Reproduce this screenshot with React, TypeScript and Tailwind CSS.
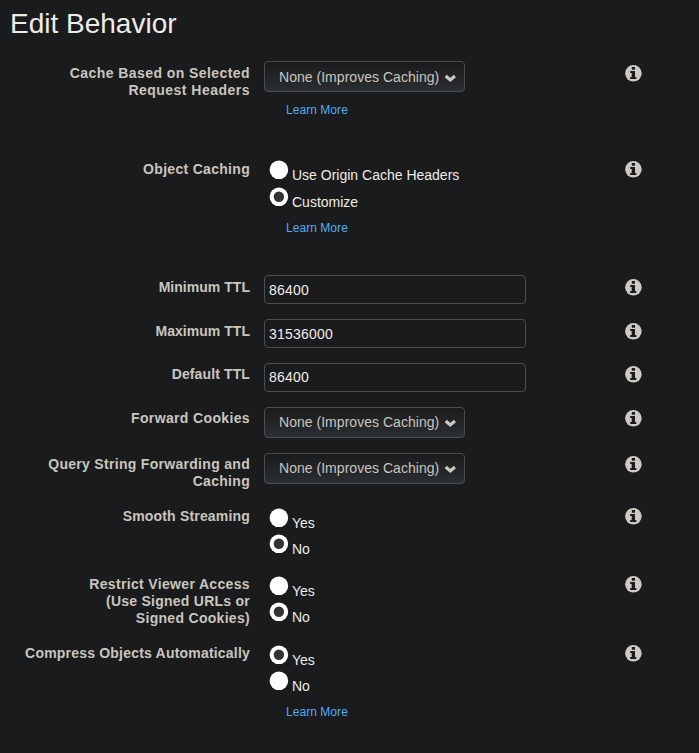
import type { ReactNode } from "react";

interface LabelLine {
  text: string;
  tracking?: string;
}

function InfoIcon() {
  return (
    <svg viewBox="0 0 17 17" className="block h-[17px] w-[17px]" aria-label="Info">
      <circle cx="8.4" cy="8.3" r="8.3" fill="#cdc8c2" />
      <path
        d="M6.8 2.1h3.2v2.6H6.8zM5.2 6h4.8v6h1.3v2.1H5.2V12h1.5V8H5.2z"
        fill="#1a1b1d"
      />
    </svg>
  );
}

function Row({
  lines,
  height,
  top = "pt-1",
  children,
}: {
  lines: LabelLine[];
  height: string;
  top?: string;
  children: ReactNode;
}) {
  return (
    <div className={`flex ${height}`}>
      <div className={`w-[250px] shrink-0 ${top} text-right text-[14px] leading-[17px] font-bold whitespace-nowrap text-[#c9c5bd]`}>
        {lines.map(({ text, tracking = "tracking-[0.3px]" }) => (
          <div key={text} className={tracking}>{text}</div>
        ))}
      </div>
      <div className="ml-[14px] w-[361px] shrink-0">{children}</div>
      <div className={top}>
        <InfoIcon />
      </div>
    </div>
  );
}

function Select({ inset = "pb-px" }: { inset?: string }) {
  return (
    <button className={`flex h-[31px] w-[201px] items-center rounded-[4px] border border-[#4b4d4f] bg-linear-to-b from-[#1a1b1d] to-[#2b2f31] ${inset} pl-[14px] text-[14px] leading-[17px] whitespace-nowrap text-[#c9c5bd]`}>
      <span className="w-[165px] text-left tracking-[0.03px]">None (Improves Caching)</span>
      <svg viewBox="0 0 12 9" className="mt-[3px] h-[9px] w-3">
        <path d="M1.7 2 6.3 6 10.9 2" fill="none" stroke="#cdc8c2" strokeWidth="3.2" />
      </svg>
    </button>
  );
}

function TextField({ value, inset = "pt-px" }: { value: string; inset?: string }) {
  return (
    <input
      readOnly
      value={value}
      className={`block h-[29px] w-[262px] rounded-[4px] border border-[#4b4d4f] bg-[#1a1b1d] px-1 ${inset} text-[14px] tracking-[0.2px] text-[#f0eeea] outline-none`}
    />
  );
}

function Radio({ label, checked = false }: { label: string; checked?: boolean }) {
  return (
    <label className="flex h-[26px] items-start pl-[5px] text-[14px] leading-[17px] text-[#eeece7]">
      <svg viewBox="0 0 20 20" className="h-5 w-5 shrink-0">
        <circle cx="9.9" cy="9.8" r="9.3" fill="#fff" />
        {checked && <circle cx="9.9" cy="9.8" r="5.2" fill="#333" />}
      </svg>
      <span className="ml-[3px] pt-[7px]">{label}</span>
    </label>
  );
}

function LearnMore() {
  return (
    <a className="ml-[22px] block text-[12px] leading-[16px] tracking-[0.05px] text-[#55aaf0]">Learn More</a>
  );
}

export default function App() {
  return (
    <main className="h-[753px] w-[699px] overflow-hidden bg-[#1a1b1d] font-['Liberation_Sans',Arial,sans-serif]">
      <h1 className="h-[61px] pt-2 pl-[10px] text-[28px] leading-[32px] text-[#eeece7]">Edit Behavior</h1>
      <Row
        lines={[
          { text: "Cache Based on Selected", tracking: "tracking-[0.43px]" },
          { text: "Request Headers", tracking: "tracking-[0.48px]" },
        ]}
        height="h-[96px]"
      >
        <Select inset="pt-px" />
        <div className="pt-[10px]"><LearnMore /></div>
      </Row>
      <Row lines={[{ text: "Object Caching" }]} height="h-[118px]">
        <div className="flex flex-col gap-px pt-[3px]">
          <Radio label="Use Origin Cache Headers" />
          <Radio label="Customize" checked />
        </div>
        <div className="pt-[7px]"><LearnMore /></div>
      </Row>
      <Row lines={[{ text: "Minimum TTL", tracking: "tracking-[0.03px]" }]} height="h-[44px]">
        <TextField value="86400" />
      </Row>
      <Row lines={[{ text: "Maximum TTL", tracking: "tracking-[0.03px]" }]} height="h-[44px]">
        <TextField value="31536000" />
      </Row>
      <Row lines={[{ text: "Default TTL", tracking: "tracking-[0.12px]" }]} height="h-[44px]" top="pt-[3px]">
        <TextField value="86400" inset="pb-px" />
      </Row>
      <Row lines={[{ text: "Forward Cookies", tracking: "tracking-[0.36px]" }]} height="h-[46px]" top="pt-[3px]">
        <Select />
      </Row>
      <Row lines={[{ text: "Query String Forwarding and" }, { text: "Caching" }]} height="h-[51px]" top="pt-[3px]">
        <Select />
      </Row>
      <Row lines={[{ text: "Smooth Streaming", tracking: "tracking-[0.18px]" }]} height="h-[68px]">
        <div className="pt-1">
          <Radio label="Yes" />
          <Radio label="No" checked />
        </div>
      </Row>
      <Row
        lines={[
          { text: "Restrict Viewer Access", tracking: "tracking-[0.34px]" },
          { text: "(Use Signed URLs or", tracking: "tracking-[0.25px]" },
          { text: "Signed Cookies)" },
        ]}
        height="h-[69px]"
      >
        <div className="pt-1">
          <Radio label="Yes" />
          <Radio label="No" checked />
        </div>
      </Row>
      <Row lines={[{ text: "Compress Objects Automatically", tracking: "tracking-[0.2px]" }]} height="h-[112px]">
        <div className="pt-1">
          <Radio label="Yes" checked />
          <Radio label="No" />
        </div>
        <div className="pt-[7px]"><LearnMore /></div>
      </Row>
    </main>
  );
}
